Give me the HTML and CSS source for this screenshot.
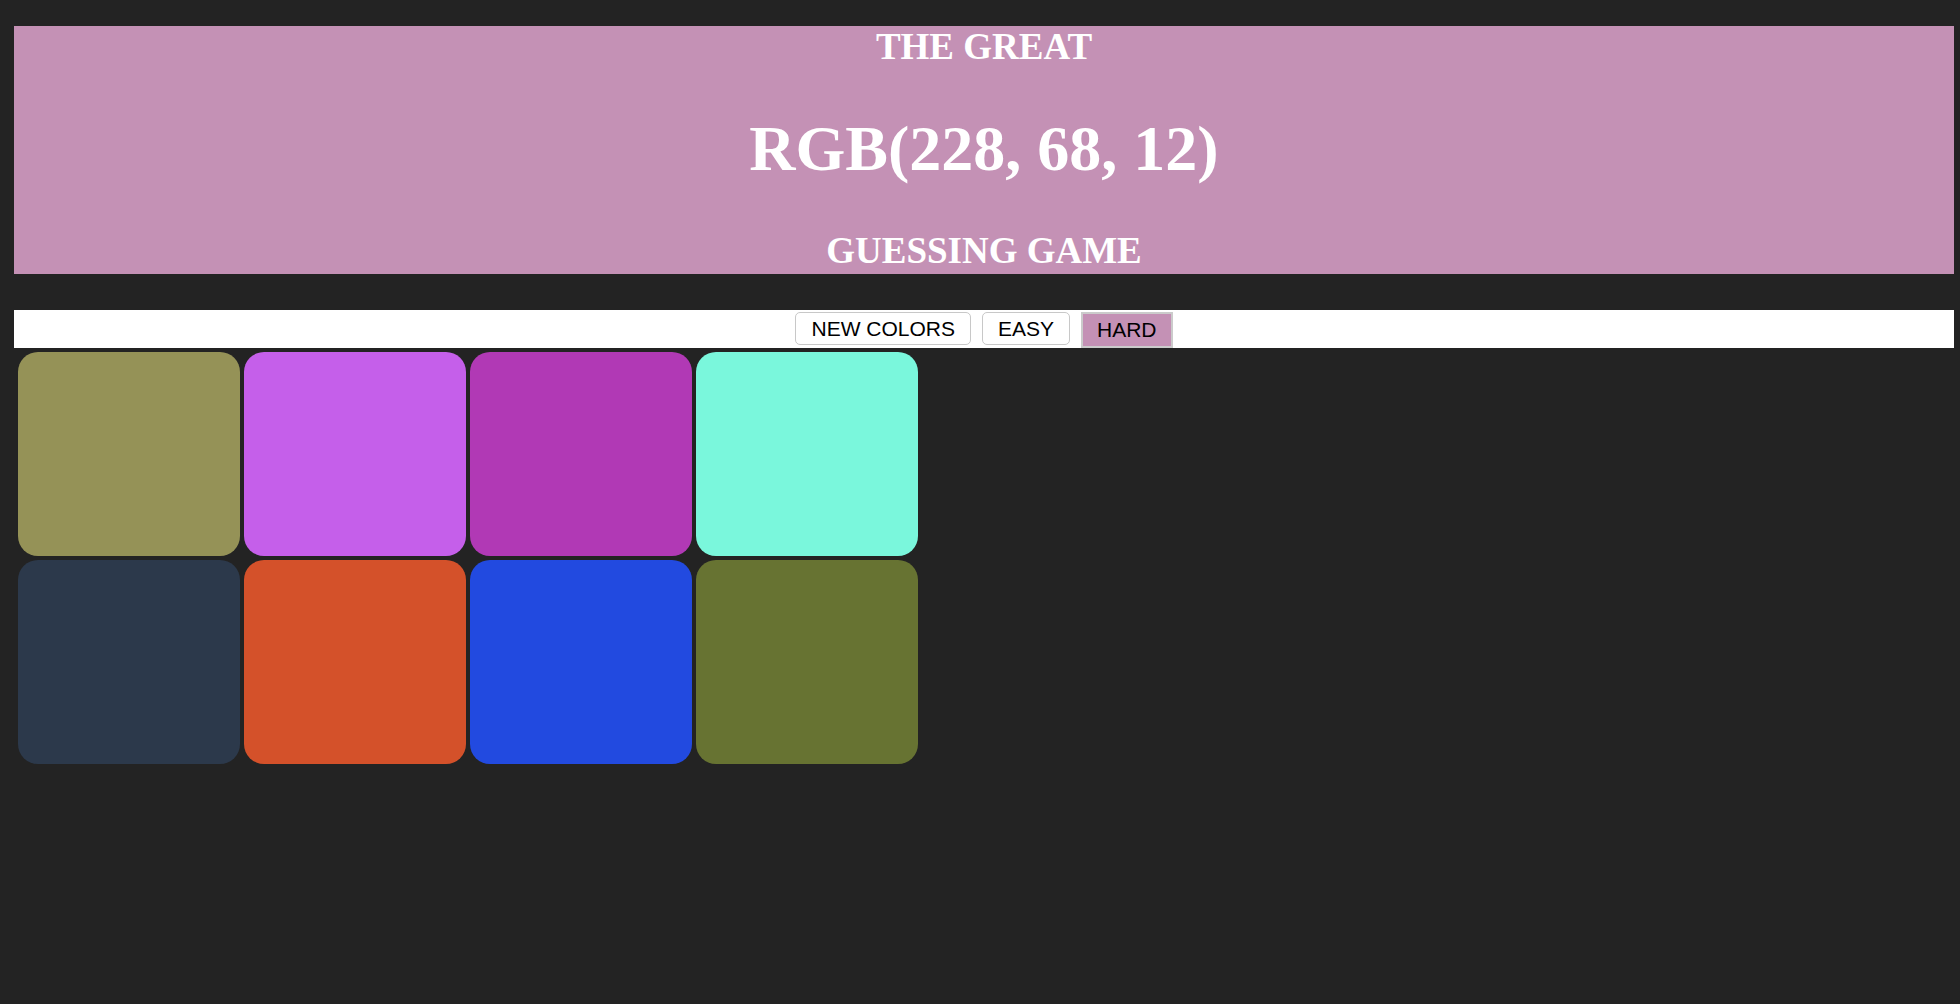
FILE: index.html
```html
<!DOCTYPE html>
<html>
<head>
<meta charset="utf-8">
<title>The Great RGB Guessing Game</title>
<link rel="stylesheet" href="styles.css">
</head>
<body>
  <header class="banner">
    <h2 class="banner-line">THE GREAT</h2>
    <h1 class="banner-rgb">RGB(228, 68, 12)</h1>
    <h2 class="banner-line banner-last">GUESSING GAME</h2>
  </header>
  <nav class="controls">
    <button class="btn">NEW COLORS</button>
    <button class="btn">EASY</button>
    <button class="btn btn-selected">HARD</button>
  </nav>
  <main class="board">
    <div class="square sq1"></div>
    <div class="square sq2"></div>
    <div class="square sq3"></div>
    <div class="square sq4"></div>
    <div class="square sq5"></div>
    <div class="square sq6"></div>
    <div class="square sq7"></div>
    <div class="square sq8"></div>
  </main>
</body>
</html>
```
FILE: styles.css
```css
html, body {
  background: #232323;
}
body {
  margin: 0;
  padding: 26px 6px 0 14px;
  font-family: "Liberation Serif", "Times New Roman", serif;
}
.banner {
  background: #c491b5;
  color: #ffffff;
  text-align: center;
  height: 248px;
  box-sizing: border-box;
  overflow: hidden;
}
.banner-line {
  margin: 0;
  font-size: 37px;
  line-height: 41px;
  font-weight: bold;
}
.banner-rgb {
  margin: 43px 0 43px;
  font-size: 64px;
  line-height: 77px;
  font-weight: bold;
}
.controls {
  margin-top: 36px;
  background: #ffffff;
  height: 38px;
  box-sizing: border-box;
  padding-top: 2px;
  display: flex;
  justify-content: center;
  align-items: flex-start;
  gap: 11px;
}
.btn {
  font-family: "Liberation Sans", Arial, sans-serif;
  font-size: 21px;
  color: #000000;
  background: #ffffff;
  border: 1px solid #c8c8c8;
  border-radius: 5px;
  height: 33px;
  padding: 0 15px;
  margin: 0;
  line-height: 31px;
}
.btn-selected {
  background: #c491b5;
  border: 2px solid #cbcbcb;
  border-radius: 0;
  height: 36px;
  padding: 0 14px;
  line-height: 32px;
}
.board {
  display: grid;
  grid-template-columns: repeat(4, 222px);
  grid-auto-rows: 204px;
  gap: 4px;
  padding: 4px;
}
.square {
  border-radius: 20px;
}
.sq1 { background: #959257; }
.sq2 { background: #c55fea; }
.sq3 { background: #b139b5; }
.sq4 { background: #7af7dc; }
.sq5 { background: #2c394b; }
.sq6 { background: #d4512a; }
.sq7 { background: #224ae0; }
.sq8 { background: #677332; }
```
